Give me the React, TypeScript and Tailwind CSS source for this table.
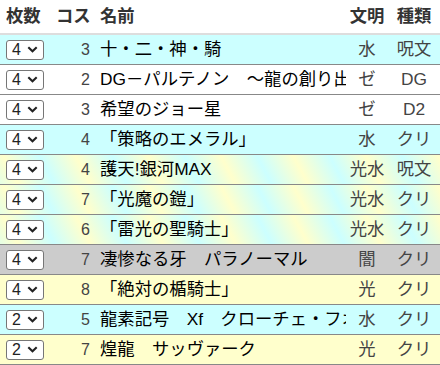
import React from 'react';

type Row = {
  count: number;
  cost: number;
  name: string;
  civ: string;
  kind: string;
  bg: string;
};

const CYAN = 'bg-[#ccffff]';
const WHITE = 'bg-white';
const YELLOW = 'bg-[#ffffcc]';
const GRAY = 'bg-[#cccccc]';
const STRIPE = 'bg-[repeating-linear-gradient(62deg,#ccffff_48px,#ffffcc_80px,#ccffff_112px)]';

const rows: Row[] = [
  { count: 4, cost: 3, name: '十・二・神・騎', civ: '水', kind: '呪文', bg: CYAN },
  { count: 4, cost: 2, name: 'DG－パルテノン　〜龍の創り出されし遺跡〜', civ: 'ゼ', kind: 'DG', bg: WHITE },
  { count: 4, cost: 3, name: '希望のジョー星', civ: 'ゼ', kind: 'D2', bg: WHITE },
  { count: 4, cost: 4, name: '「策略のエメラル」', civ: '水', kind: 'クリ', bg: CYAN },
  { count: 4, cost: 4, name: '護天!銀河MAX', civ: '光水', kind: '呪文', bg: STRIPE },
  { count: 4, cost: 7, name: '「光魔の鎧」', civ: '光水', kind: 'クリ', bg: STRIPE },
  { count: 4, cost: 6, name: '「雷光の聖騎士」', civ: '光水', kind: 'クリ', bg: STRIPE },
  { count: 4, cost: 7, name: '凄惨なる牙　パラノーマル', civ: '闇', kind: 'クリ', bg: GRAY },
  { count: 4, cost: 8, name: '「絶対の楯騎士」', civ: '光', kind: 'クリ', bg: YELLOW },
  { count: 2, cost: 5, name: '龍素記号　Xf　クローチェ・フオーコ', civ: '水', kind: 'クリ', bg: CYAN },
  { count: 2, cost: 7, name: '煌龍　サッヴァーク', civ: '光', kind: 'クリ', bg: YELLOW },
];

const cols = 'grid grid-cols-[50px_44px_252px_42px_52px] items-center';

const CountSelect: React.FC<{ value: number }> = ({ value }) => (
  <div className="flex items-center w-[38px] h-[20px] border border-[#767676] rounded-[3px] bg-white pl-[5px] text-[16px] leading-none text-[#222]">
    <span>{value}</span>
    <svg className="ml-[6px]" width="11" height="7" viewBox="0 0 11 7">
      <path d="M1.3 1.3 L5.5 5.3 L9.7 1.3" fill="none" stroke="#222" strokeWidth="2.1" />
    </svg>
  </div>
);

export default function App() {
  return (
    <div className="w-[440px] h-[365px] overflow-hidden bg-white text-[13pt] font-['Liberation_Sans','Noto_Sans_CJK_JP',sans-serif]">
      <div className={`${cols} h-[35px] border-b-2 border-[#dddddd] font-bold text-[#333]`}>
        <div className="pl-[6px]">枚数</div>
        <div className="pl-[6px] whitespace-nowrap">コス</div>
        <div className="pl-[6px]">名前</div>
        <div className="text-center whitespace-nowrap">文明</div>
        <div className="text-center">種類</div>
      </div>
      {rows.map((r, i) => (
        <div key={i} className={`${cols} h-[30px] border-b border-[#888888] ${r.bg}`}>
          <div className="pl-[6px]">
            <CountSelect value={r.count} />
          </div>
          <div className="pr-[4px] text-right text-[16px] text-[#444]">{r.cost}</div>
          <div className="pl-[6px] overflow-hidden whitespace-nowrap text-black">{r.name}</div>
          <div className="text-center whitespace-nowrap text-[#444]">{r.civ}</div>
          <div className="text-center text-[#444]">{r.kind}</div>
        </div>
      ))}
    </div>
  );
}
